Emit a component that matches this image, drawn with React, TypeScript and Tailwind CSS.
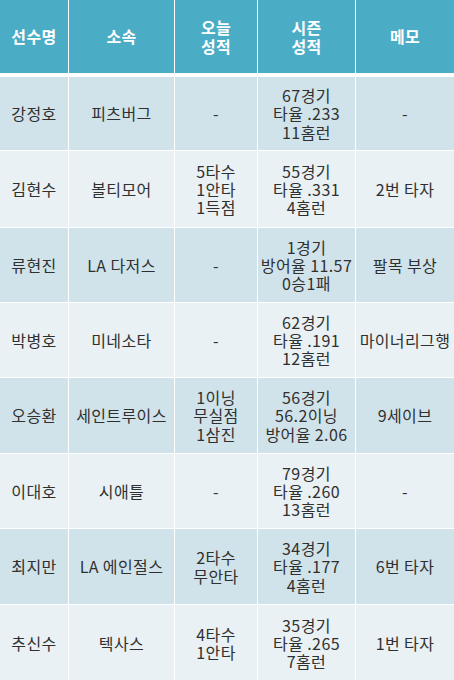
import React from "react";

type Row = { name: string; team: string; today: string[]; season: string[]; memo: string };

const rows: Row[] = [
  { name: "강정호", team: "피츠버그", today: ["-"], season: ["67경기", "타율 .233", "11홈런"], memo: "-" },
  { name: "김현수", team: "볼티모어", today: ["5타수", "1안타", "1득점"], season: ["55경기", "타율 .331", "4홈런"], memo: "2번 타자" },
  { name: "류현진", team: "LA 다저스", today: ["-"], season: ["1경기", "방어율 11.57", "0승1패"], memo: "팔목 부상" },
  { name: "박병호", team: "미네소타", today: ["-"], season: ["62경기", "타율 .191", "12홈런"], memo: "마이너리그행" },
  { name: "오승환", team: "세인트루이스", today: ["1이닝", "무실점", "1삼진"], season: ["56경기", "56.2이닝", "방어율 2.06"], memo: "9세이브" },
  { name: "이대호", team: "시애틀", today: ["-"], season: ["79경기", "타율 .260", "13홈런"], memo: "-" },
  { name: "최지만", team: "LA 에인절스", today: ["2타수", "무안타"], season: ["34경기", "타율 .177", "4홈런"], memo: "6번 타자" },
  { name: "추신수", team: "텍사스", today: ["4타수", "1안타"], season: ["35경기", "타율 .265", "7홈런"], memo: "1번 타자" },
];

const heights = ["h-[73px]", "h-[76px]", "h-[74px]", "h-[74px]", "h-[75px]", "h-[74px]", "h-[75px]", "h-[76px]"];

const cols = "grid grid-cols-[68px_105px_82px_97px_98px] gap-x-px";

function Lines({ lines }: { lines: string[] }) {
  return (
    <div className="flex flex-col items-center">
      {lines.map((l, i) => (
        <span key={i} className="whitespace-nowrap h-[18.3px] leading-[18.3px]">{l}</span>
      ))}
    </div>
  );
}

export default function App() {
  return (
    <div
      className="w-[454px] h-[680px] bg-white overflow-hidden text-[16px] leading-[18.3px] tracking-[0.4px] text-[#303030]"
      style={{ fontFamily: '"Noto Sans CJK KR", "Noto Sans", sans-serif' }}
    >
      <div className={`${cols} h-[73px] font-bold text-white`}>
        {[["선수명"], ["소속"], ["오늘", "성적"], ["시즌", "성적"], ["메모"]].map((h, i) => (
          <div key={i} className="bg-[#4bacc6] flex items-center justify-center text-center">
            <Lines lines={h} />
          </div>
        ))}
      </div>
      <div className="flex flex-col gap-y-px mt-[4px]">
        {rows.map((r, i) => {
          const bg = i % 2 === 0 ? "bg-[#d0e3ea]" : "bg-[#e9f1f4]";
          return (
            <div key={i} className={`${cols} ${heights[i]}`}>
              <div className={`${bg} flex items-center justify-center`}>{r.name}</div>
              <div className={`${bg} flex items-center justify-center whitespace-nowrap`}>{r.team}</div>
              <div className={`${bg} flex items-center justify-center`}>
                <Lines lines={r.today} />
              </div>
              <div className={`${bg} flex items-center justify-center`}>
                <Lines lines={r.season} />
              </div>
              <div className={`${bg} flex items-center justify-center whitespace-nowrap`}>{r.memo}</div>
            </div>
          );
        })}
      </div>
    </div>
  );
}
